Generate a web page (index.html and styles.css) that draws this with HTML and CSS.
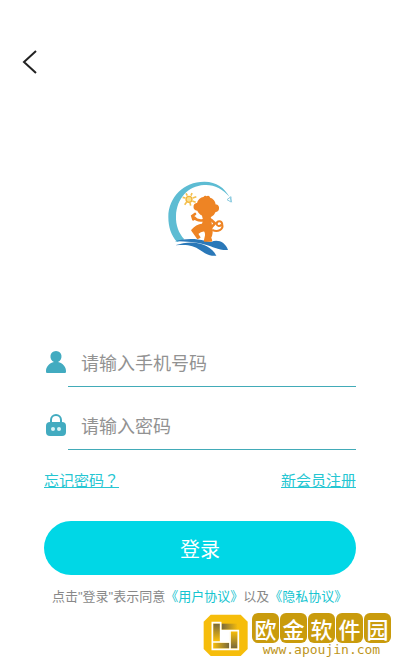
FILE: index.html
```html
<!DOCTYPE html>
<html lang="zh-CN">
<head>
  <meta charset="UTF-8">
  <meta name="viewport" content="width=device-width, initial-scale=1">
  <title>登录</title>
  <link rel="stylesheet" href="styles.css">
</head>
<body>

  <header class="topbar">
    <button class="back" type="button" aria-label="返回">
      <svg width="16" height="24" viewBox="0 0 16 24" fill="none" stroke="#222" stroke-width="2">
        <path d="M14 1 2 12l12 11"/>
      </svg>
    </button>
  </header>

  <main class="login">
    <svg class="logo" width="72" height="82" viewBox="0 0 216 246" aria-hidden="true">
      <!-- ring -->
      <path fill="#5dbcd3" d="M197 57C180 28 158 12 122 11 60 10 13 58 13 116c0 32 9 56 26 76l22-8c-17-19-26-42-25-70 2-53 36-90 84-93 30-2 54 10 77 36z"/>
      <!-- sun -->
      <circle cx="75" cy="64" r="9" fill="#fbdf8c" stroke="#f2b53c" stroke-width="4"/>
      <path fill="none" stroke="#f5c04d" stroke-width="5" d="M56 58l8 2M66 46l4 7M84 45l-3 8M97 56l-11 4M95 73l-10-4M80 83l-2-9M62 80l6-8"/>
      <!-- star -->
      <path fill="none" stroke="#8bcbe0" stroke-width="3" d="M189 65l12-9v16zM198 57l5 16"/>
      <!-- waves -->
      <path fill="#2a78b8" d="M32 190c34-9 61-8 91-2l18 4c20-9 43 0 51 24-31 1-45-11-67-16-31-8-54-9-93-10z"/>
      <path fill="#2a78b8" d="M33 202c36-13 70-11 94 2 14 8 24 17 30 29-22 2-34-6-48-16-22-16-39-18-76-15z"/>
      <!-- monkey -->
      <path fill="#ee8424" stroke="#ee8424" stroke-width="5" stroke-linejoin="round" d="M120 61c1-6 5-7 8-2 4-5 8-3 8 2 10 3 16 11 17 20 13-1 13 18 0 19-3 8-8 13-15 16l4 30c3 14 2 24-3 33l3 8v2h-20l2-10c3-9 2-16-3-22-9 1-16 5-21 10l7 11-6 3-17-24c9-11 19-16 32-18l4-12-4-16c-8-4-12-8-14-15-14 1-15-18-1-19 2-10 9-16 20-18z"/>
      <path fill="none" stroke="#ee8424" stroke-width="8" stroke-linecap="round" d="M117 127c-13 2-22-2-27-9M93 108l-8 6 3 10M142 126l11 10-11 12"/>
      <path fill="none" stroke="#ee8424" stroke-width="6" d="M145 156c17 8 33-2 30-16-2-14-17-12-17-2 1 8 10 8 14 2"/>
    </svg>

    <form class="form">
      <div class="field">
        <label for="phone" aria-label="手机号码">
          <svg width="20" height="24" viewBox="0 0 20 24" fill="#42abc0">
            <path d="M10 0C3 0 3 9 8 11 3 12 0 16 0 20c0 1 0 2 1 2h18c1 0 1-1 1-2 0-4-3-8-8-9 5-2 5-11-2-11z"/>
          </svg>
        </label>
        <input id="phone" type="tel" placeholder="请输入手机号码">
      </div>

      <div class="field">
        <label for="password" aria-label="密码">
          <svg width="20" height="24" viewBox="0 0 20 24">
            <path fill="none" stroke="#42abc0" stroke-width="2" d="M5 10V6a5 5 0 0 1 10 0v4"/>
            <rect y="8" width="20" height="14" rx="4" fill="#42abc0"/>
            <circle cx="7" cy="15" r="2" fill="#d8f3f5"/>
            <circle cx="13" cy="15" r="2" fill="#d8f3f5"/>
          </svg>
        </label>
        <input id="password" type="password" placeholder="请输入密码">
      </div>

      <div class="links">
        <a href="#">忘记密码<span class="mark" lang="zh-TW">？</span></a>
        <a href="#">新会员注册</a>
      </div>

      <button class="submit" type="submit">登录</button>
    </form>

    <p class="agreement">点击"登录"表示同意<a href="#">《用户协议》</a>以及<a href="#">《隐私协议》</a></p>
  </main>

  <footer class="brand">
    <svg width="50" height="48" viewBox="0 0 150 144" aria-hidden="true">
      <defs>
        <linearGradient id="right" x1="0" x2="1">
          <stop offset="0" stop-color="#77683c"/>
          <stop offset="1" stop-color="#f6bd0b"/>
        </linearGradient>
        <linearGradient id="left" x1="1" x2="0">
          <stop offset="0" stop-color="#77683c"/>
          <stop offset="1" stop-color="#f6bd0b"/>
        </linearGradient>
        <linearGradient id="down" x1="0" x2="0" y1="0" y2="1">
          <stop offset="0" stop-color="#77683c"/>
          <stop offset="1" stop-color="#f6bd0b"/>
        </linearGradient>
        <linearGradient id="up" x1="0" x2="0" y1="1" y2="0">
          <stop offset="0" stop-color="#77683c"/>
          <stop offset="1" stop-color="#f6bd0b"/>
        </linearGradient>
      </defs>
      <path fill="#f6bd0b" d="M29 11h90l21 21v82l-21 21H29L8 114V32z"/>
      <path fill="#fff" d="M58 60h28v34H58z"/>
      <path fill="url(#down)" d="M37 38h20v50H37z"/>
      <path fill="url(#right)" d="M62 38h48v18H62z"/>
      <path fill="url(#up)" d="M89 62h20v50H89z"/>
      <path fill="url(#left)" d="M37 96h48v16H37z"/>
      <path fill="none" stroke="#fff" stroke-width="5" d="M61 35H34v80h53M59 33v60M59 59h53v56H87M87 59v57M34 93h53"/>
    </svg>
    <div class="brand-text">
      <div class="brand-name"><span>欧</span><span>金</span><span>软</span><span>件</span><span>园</span></div>
      <div class="brand-url">www.apoujin.com</div>
    </div>
  </footer>

</body>
</html>
```
FILE: styles.css
```css
* {
  box-sizing: border-box;
}

body {
  margin: 0;
  background: #fff;
  color: #888;
  font-family: "Noto Sans CJK SC", sans-serif;
}

svg {
  display: block;
}

.topbar {
  padding: 50px 22px 0;
}

.back {
  display: block;
  padding: 0;
  border: none;
  background: none;
  cursor: pointer;
}

.login {
  padding: 104px 44px 0;
}

.logo {
  margin: 0 auto;
}

.form {
  margin-top: 78px;
}

.field {
  display: flex;
  align-items: center;
  height: 49px;
  margin-bottom: 14px;
}

.field label {
  width: 24px;
  padding-left: 2px;
}

.field input {
  flex: 1;
  min-width: 0;
  height: 100%;
  padding: 0 13px;
  border: none;
  border-bottom: 1px solid #42abb8;
  background: none;
  color: #333;
  font: inherit;
  font-size: 18px;
  outline: none;
}

.field input::placeholder {
  color: #929292;
  opacity: 1;
}

.links {
  display: flex;
  justify-content: space-between;
  margin-top: 18px;
  font-size: 15px;
  line-height: 24px;
}

.links a {
  color: #25c6d2;
}

.mark {
  font-family: "Noto Sans CJK TC", sans-serif;
}

.submit {
  display: block;
  width: 100%;
  height: 54px;
  margin-top: 29px;
  border: none;
  border-radius: 27px;
  background: #00d7e6;
  color: #fff;
  font: inherit;
  font-size: 20px;
  cursor: pointer;
}

.agreement {
  margin: 12px 0 0;
  padding-left: 8px;
  font-family: "Liberation Sans", "Noto Sans CJK SC", sans-serif;
  font-size: 13px;
  line-height: 20px;
  white-space: nowrap;
}

.agreement a {
  color: #14c5d0;
  text-decoration: none;
}

.brand {
  display: flex;
  justify-content: flex-end;
  align-items: center;
  gap: 1px;
  padding: 4px 9px 0 0;
}

.brand-name {
  display: flex;
  gap: 1px;
}

.brand-name span {
  width: 27px;
  border-radius: 6px;
  background: #c99b0c;
  color: #fff;
  font-size: 22px;
  font-weight: 500;
  line-height: 30px;
  text-align: center;
}

.brand-url {
  color: #bd951b;
  font-family: "DejaVu Sans Mono", monospace;
  font-size: 13px;
  line-height: 14px;
  text-align: center;
}
```
